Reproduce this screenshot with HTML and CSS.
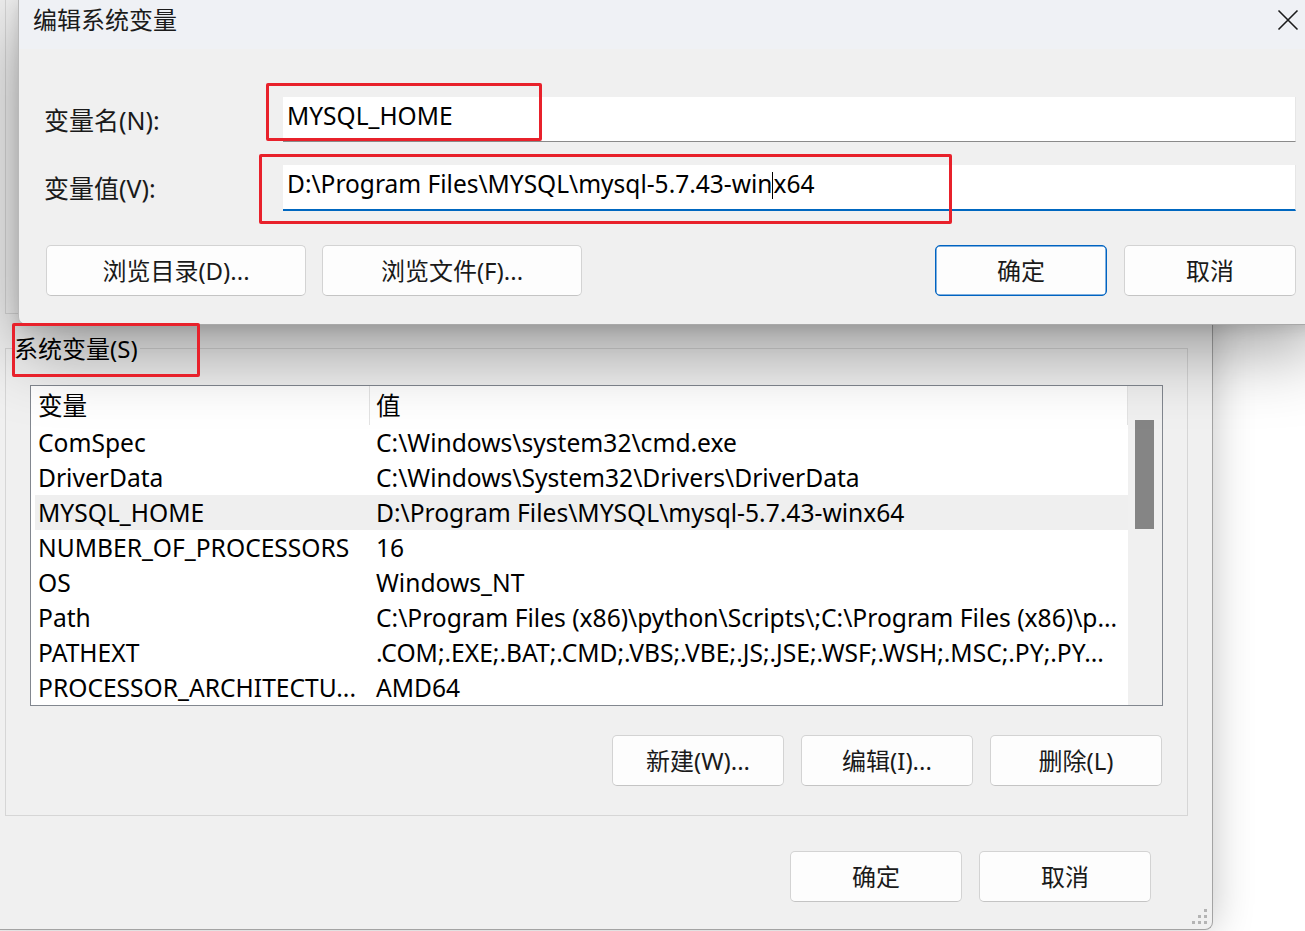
FILE: index.html
```html
<!DOCTYPE html>
<html lang="zh-CN">
<head>
<meta charset="utf-8">
<title>编辑系统变量</title>
<link rel="stylesheet" href="styles.css">
</head>
<body>
<div class="desktop">

  <div class="env-window">
    <div class="groupbox groupbox-user"></div>

    <div class="groupbox groupbox-sys">
      <div class="group-label">系统变量(S)</div>
      <div class="listbox">
        <div class="list-main">
          <div class="list-header">
            <div class="cell c1">变量</div>
            <div class="cell c2">值</div>
          </div>
          <div class="row"><div class="cell c1">ComSpec</div><div class="cell c2">C:\Windows\system32\cmd.exe</div></div>
          <div class="row"><div class="cell c1">DriverData</div><div class="cell c2">C:\Windows\System32\Drivers\DriverData</div></div>
          <div class="row selected"><div class="cell c1">MYSQL_HOME</div><div class="cell c2">D:\Program Files\MYSQL\mysql-5.7.43-winx64</div></div>
          <div class="row"><div class="cell c1">NUMBER_OF_PROCESSORS</div><div class="cell c2">16</div></div>
          <div class="row"><div class="cell c1">OS</div><div class="cell c2">Windows_NT</div></div>
          <div class="row"><div class="cell c1">Path</div><div class="cell c2">C:\Program Files (x86)\python\Scripts\;C:\Program Files (x86)\p...</div></div>
          <div class="row"><div class="cell c1">PATHEXT</div><div class="cell c2">.COM;.EXE;.BAT;.CMD;.VBS;.VBE;.JS;.JSE;.WSF;.WSH;.MSC;.PY;.PY...</div></div>
          <div class="row"><div class="cell c1">PROCESSOR_ARCHITECTU...</div><div class="cell c2">AMD64</div></div>
        </div>
        <div class="scrollbar"><div class="thumb"></div></div>
      </div>
      <div class="btn-row">
        <button class="btn btn-small">新建(W)...</button>
        <button class="btn btn-small">编辑(I)...</button>
        <button class="btn btn-small">删除(L)</button>
      </div>
    </div>

    <div class="btn-row bottom-row">
      <button class="btn btn-small">确定</button>
      <button class="btn btn-small">取消</button>
    </div>
    <div class="grip">
      <span class="dot d1"></span><span class="dot d2"></span><span class="dot d3"></span>
      <span class="dot d4"></span><span class="dot d5"></span><span class="dot d6"></span>
    </div>
  </div>

  <div class="edit-dialog">
    <div class="titlebar">
      <div class="title">编辑系统变量</div>
      <svg class="close" width="22" height="22" viewBox="0 0 22 22" aria-hidden="true">
        <path d="M1.5 1.5 L20.5 20.5 M20.5 1.5 L1.5 20.5" stroke="#1b1b1b" stroke-width="1.6" fill="none"/>
      </svg>
    </div>
    <div class="dialog-body">
      <div class="field">
        <div class="field-label">变量名(N):</div>
        <div class="input">MYSQL_HOME</div>
      </div>
      <div class="field">
        <div class="field-label">变量值(V):</div>
        <div class="input input-focus">D:\Program Files\MYSQL\mysql-5.7.43-win<span class="caret"></span>x64</div>
      </div>
      <div class="dialog-buttons">
        <div class="btn-group">
          <button class="btn btn-wide">浏览目录(D)...</button>
          <button class="btn btn-wide">浏览文件(F)...</button>
        </div>
        <div class="btn-group right">
          <button class="btn btn-small btn-default">确定</button>
          <button class="btn btn-small">取消</button>
        </div>
      </div>
    </div>
  </div>

  <div class="mark mark-name"></div>
  <div class="mark mark-value"></div>
  <div class="mark mark-group"></div>
</div>
</body>
</html>
```

FILE: styles.css
```css
* {
  box-sizing: border-box;
}

html, body {
  margin: 0;
  padding: 0;
}

body {
  background: #ffffff;
  font-family: "Noto Sans", "Noto Sans CJK SC", sans-serif;
  color: #000;
}

.desktop {
  position: relative;
  width: 1305px;
  height: 931px;
  overflow: hidden;
  background: #ffffff;
}

/* ---------- back window: 环境变量 ---------- */
.env-window {
  position: absolute;
  left: -20px;
  top: 0;
  width: 1233px;
  height: 930px;
  background: #f0f0f0;
  border-right: 1px solid #a3a3a3;
  border-bottom: 1px solid #a3a3a3;
  border-bottom-right-radius: 8px;
  box-shadow: 0 0 42px rgba(0, 0, 0, 0.24);
  padding: 0 0 0 25px;
}

.groupbox {
  border: 1px solid #d6d6d6;
  width: 1183px;
}

.groupbox-user {
  height: 314px;
  border-top: none;
}

.groupbox-sys {
  margin-top: 34px;
  padding: 0 25px 29px 24px;
}

.group-label {
  display: block;
  width: fit-content;
  margin: -16px 0 0 -17px;
  padding: 0 2px 0 1px;
  height: 32px;
  line-height: 32px;
  font-size: 24px;
  background: #f0f0f0;
}

.listbox {
  margin-top: 20px;
  width: 1133px;
  height: 321px;
  border: 1px solid #82878f;
  background: #ffffff;
  display: flex;
  overflow: hidden;
}

.list-main {
  flex: 1;
  padding-left: 4px;
  overflow: hidden;
}

.list-header, .row {
  display: flex;
  font-size: 24.6px;
  white-space: nowrap;
}

.list-header {
  height: 39px;
  line-height: 40px;
}

.row {
  height: 35px;
  line-height: 36px;
}

.row.selected {
  background: #efefef;
}

.cell {
  overflow: hidden;
}

.c1 {
  width: 335px;
  padding-left: 3px;
  flex: none;
}

.c2 {
  flex: 1;
  padding-left: 6px;
}

.list-header .c1,
.list-header .c2 {
  border-right: 1px solid #e3e3e3;
}

.scrollbar {
  width: 34px;
  flex: none;
  background: #f0f0f0;
  padding: 34px 0 0 7px;
}

.thumb {
  width: 19px;
  height: 109px;
  background: #858585;
}

.btn-row {
  display: flex;
  justify-content: flex-end;
  gap: 17px;
  margin-top: 29px;
}

.bottom-row {
  width: 1146px;
  margin-top: 35px;
}

.btn {
  font-family: "Noto Sans", "Noto Sans CJK SC", sans-serif;
  font-size: 24px;
  color: #1a1a1a;
  background: #fdfdfd;
  border: 1px solid #d3d3d3;
  border-bottom-color: #c4c4c4;
  border-radius: 5px;
  height: 51px;
  padding: 0;
  line-height: 1;
}

.btn-small {
  width: 172px;
}

.btn-wide {
  width: 260px;
}

.btn-default {
  border: 1px solid #0063c1;
  box-shadow: inset 0 0 0 0.5px #0063c1;
}

.grip {
  position: absolute;
  right: 4px;
  bottom: 4px;
  width: 17px;
  height: 17px;
}

.dot {
  position: absolute;
  width: 3px;
  height: 3px;
  background: #b4b4b4;
}

.d1 { right: 1px; top: 1px; }
.d2 { right: 7px; top: 7px; }
.d3 { right: 1px; top: 7px; }
.d4 { right: 13px; top: 13px; }
.d5 { right: 7px; top: 13px; }
.d6 { right: 1px; top: 13px; }

/* ---------- front dialog: 编辑系统变量 ---------- */
.edit-dialog {
  position: absolute;
  left: 18px;
  top: 0;
  width: 1300px;
  height: 325px;
  background: #f0f0f0;
  border-left: 1px solid #b9b9b9;
  border-bottom: 1px solid #a8a8a8;
  border-bottom-left-radius: 8px;
  box-shadow: 0 24px 72px rgba(0, 0, 0, 0.38), 0 4px 14px rgba(0, 0, 0, 0.1);
}

.titlebar {
  height: 49px;
  background: #eff1f5;
  display: flex;
  align-items: center;
  justify-content: space-between;
  padding: 0 19px 9px 14px;
}

.title {
  font-size: 24px;
  line-height: 40px;
  color: #1b1b1b;
}

.close {
  display: block;
}

.dialog-body {
  padding: 48px 22px 0 25px;
}

.field {
  display: flex;
  align-items: center;
  margin-bottom: 23px;
}

.field-label {
  width: 239px;
  flex: none;
  font-size: 25px;
  color: #1a1a1a;
  padding-bottom: 2px;
}

.input {
  flex: 1;
  height: 45px;
  background: #ffffff;
  border-right: 1px solid #e6e6e6;
  border-bottom: 1px solid #8a8a8a;
  font-size: 24.5px;
  line-height: 38px;
  padding-left: 4px;
  white-space: nowrap;
  color: #000;
}

.input-focus {
  height: 46px;
  border-bottom: 2px solid #0067c0;
}

.caret {
  display: inline-block;
  width: 0;
  height: 27px;
  border-left: 1px solid #000;
  vertical-align: -6px;
}

.dialog-buttons {
  display: flex;
  justify-content: space-between;
  margin-top: 34px;
  padding-left: 2px;
}

.btn-group {
  display: flex;
  gap: 16px;
}

.btn-group.right {
  gap: 17px;
}

/* ---------- red annotation frames ---------- */
.mark {
  position: absolute;
  border: 3px solid #e8212b;
  border-radius: 2px;
}

.mark-name {
  left: 266px;
  top: 83px;
  width: 276px;
  height: 58px;
}

.mark-value {
  left: 259px;
  top: 154px;
  width: 693px;
  height: 70px;
}

.mark-group {
  left: 12px;
  top: 323px;
  width: 188px;
  height: 54px;
}
```
